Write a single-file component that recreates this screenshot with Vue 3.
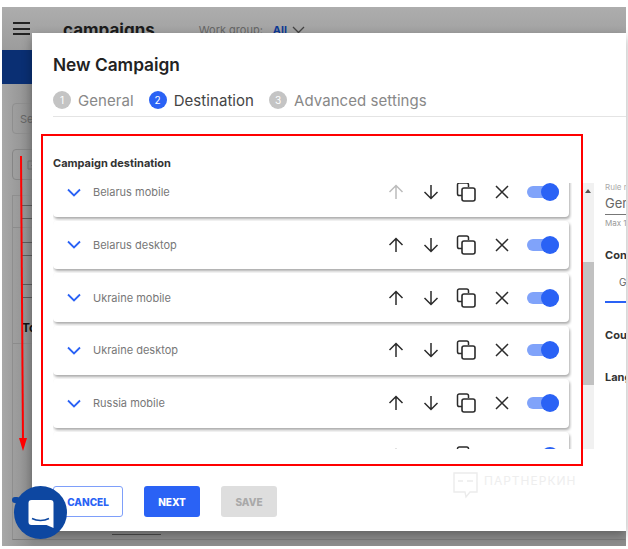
<script setup>
const rows = [
  { name: 'Belarus mobile', upOff: true },
  { name: 'Belarus desktop' },
  { name: 'Ukraine mobile' },
  { name: 'Ukraine desktop' },
  { name: 'Russia mobile' },
  { name: '' }
]
</script>

<template>
  <div class="page">
    <div class="app">
      <header class="topbar">
        <div class="burger"><i></i><i></i><i></i></div>
        <div class="brand">campaigns</div>
        <div class="wg">Work group: <b>All</b>
          <svg width="13" height="8" viewBox="0 0 13 8"><path d="M1 1l5.500 5.500L12 1" fill="none" stroke="#444" stroke-width="1.300"/></svg>
        </div>
      </header>
      <div class="band"></div>
      <div class="side">
        <div class="search">Se</div>
        <div class="tool">
          <svg width="10" height="10" viewBox="0 0 10 10"><path d="M5 1H1v8h8V5M4 6l5-5" fill="none" stroke="#777" stroke-width="1"/></svg>
        </div>
        <div class="tbl">
          <div class="tline"></div>
          <div class="tline"></div>
          <div class="tsep"></div>
          <div class="tline"></div>
          <div class="tline"></div>
          <div class="tline"></div>
          <div class="tline"></div>
          <div class="ttl">To</div>
          <div class="tsep"></div>
        </div>
      </div>
      <i class="dot"></i>
      <i class="handle"></i>
    </div>

    <section class="modal">
      <h1>New Campaign</h1>
      <div class="steps">
        <div class="step"><span class="num">1</span>General</div>
        <div class="step on"><span class="num">2</span>Destination</div>
        <div class="step"><span class="num">3</span>Advanced settings</div>
      </div>
      <div class="body">
        <div class="col">
          <h2>Campaign destination</h2>
          <div class="listwrap">
            <div class="list">
              <div v-for="(r, i) in rows" :key="i" class="card">
                <svg class="chev" width="14" height="9" viewBox="0 0 14 9"><path d="M1 1.500l6 6 6-6" fill="none" stroke="#2a62f5" stroke-width="1.800"/></svg>
                <span class="name">{{ r.name }}</span>
                <div class="acts">
                  <svg class="ic" :class="{ off: r.upOff }" width="18" height="18" viewBox="0 0 18 18"><path d="M9 16V2.500M2.500 9L9 2.500 15.500 9" fill="none" stroke="currentColor" stroke-width="1.500"/></svg>
                  <svg class="ic dn" width="18" height="18" viewBox="0 0 18 18"><path d="M9 2v13.500M2.500 9L9 15.500 15.500 9" fill="none" stroke="currentColor" stroke-width="1.500"/></svg>
                  <svg class="ic" width="20" height="20" viewBox="0 0 20 20"><path d="M6 13.500H3.300A1.800 1.800 0 0 1 1.500 11.700V2.800A1.800 1.800 0 0 1 3.300 1H10.700A1.800 1.800 0 0 1 12.500 2.800V5" fill="none" stroke="currentColor" stroke-width="1.500"/><rect x="6" y="6" width="13" height="13" rx="2" fill="none" stroke="currentColor" stroke-width="1.600"/></svg>
                  <svg class="ic" width="18" height="18" viewBox="0 0 18 18"><path d="M3 3l12 12M15 3L3 15" fill="none" stroke="currentColor" stroke-width="1.500"/></svg>
                  <div class="sw"><i></i></div>
                </div>
              </div>
            </div>
            <div class="scroll">
              <span class="arrow"></span>
              <div class="thumb"></div>
            </div>
          </div>
        </div>
        <aside class="right">
          <div class="rl">Rule name</div>
          <div class="rv">General</div>
          <div class="rm">Max 100</div>
          <div class="rh">Conditions</div>
          <div class="rt">General</div>
          <div class="ru"></div>
          <div class="rh r2">Countries</div>
          <div class="rh r3">Languages</div>
        </aside>
      </div>
      <div class="foot">
        <button class="btn cancel">CANCEL</button>
        <button class="btn next">NEXT</button>
        <button class="btn save">SAVE</button>
        <div class="mark">
          <svg width="25" height="27" viewBox="0 0 25 27"><path d="M1 1h23v19h-7l-4 5-1-5H1z M5 9h5M14 9h6" fill="none" stroke="#ececec" stroke-width="1.400"/></svg>
          <span>ПАРТНЕРКИН</span>
        </div>
      </div>
    </section>

    <div class="redbox"></div>
    <div class="redline"></div>
    <svg class="redhead" width="8" height="13" viewBox="0 0 8 13"><path d="M0 0h8L4 13z" fill="#f00"/></svg>

    <div class="chat">
      <svg width="26" height="30" viewBox="0 0 26 30"><path d="M3.500 1h19a3 3 0 0 1 3 3v25l-7-3H3.500a3 3 0 0 1-3-3V4a3 3 0 0 1 3-3z" fill="#fff"/><path d="M4 19.500c5 2.500 12 2.500 17 0" fill="none" stroke="#0d47a1" stroke-width="1.500"/></svg>
    </div>
  </div>
</template>

<style>
html, body { margin: 0; background: #fff; }
</style>

<style scoped>
.page { width: 628px; height: 549px; position: relative; overflow: hidden; background: #fff; font-family: "Inter", "Liberation Sans", sans-serif; }
.app { position: absolute; left: 2px; top: 7px; right: 2px; bottom: 3px; background: #a2a2a2; display: flex; flex-direction: column; }
.topbar { height: 43px; display: flex; align-items: center; background: linear-gradient(#adadad, #9c9c9c); flex: none; }
.burger { width: 17px; margin-left: 11px; display: flex; flex-direction: column; gap: 3.500px; }
.burger i { height: 2px; background: #222; display: block; }
.brand { margin-left: 33px; font-size: 17px; font-weight: 700; color: #1b1b1b; margin-top: 2px; }
.wg { margin-left: 44px; font-size: 11px; color: #666; display: flex; align-items: center; gap: 5px; margin-top: 2px; }
.wg b { color: #0f3a96; font-weight: 700; margin-left: 5px; }
.band { height: 34px; background: #0a2f73; flex: none; }
.side { padding: 19px 0 0 10px; flex: 1; display: flex; flex-direction: column; background: linear-gradient(90deg, #a8a8a8, #8d8d8d 5%); }
.search { width: 40px; height: 31px; border: 1px solid #8e8e8e; border-radius: 4px; font-size: 11px; color: #666; display: flex; align-items: center; padding-left: 7px; box-sizing: border-box; }
.tool { width: 40px; height: 31px; border: 1px solid #858585; border-radius: 4px; margin-top: 15px; box-sizing: border-box; display: flex; align-items: center; padding-left: 14px; }
.tbl { margin-top: 15px; flex: 1; border: 1px solid #8e8e8e; border-bottom: 1px solid #7c7c7c; display: flex; flex-direction: column; margin-bottom: 6px; }
.tline { height: 1px; background: #5c5c5c; margin-top: 12px; margin-left: 9px; flex: none; }
.tline:first-child { margin-top: 9px; }
.tsep { height: 1px; background: #8b8b8b; margin-top: 8px; flex: none; }
.tsep + .tline { margin-top: 14px; }
.tline:nth-child(6) { margin-top: 28px; }
.ttl { font-size: 12px; line-height: 14px; font-weight: 700; color: #111; margin: 23px 0 0 9px; }
.dot { position: absolute; left: 10px; top: 490px; width: 8px; height: 6px; border-radius: 3px; background: #0d47a1; }
.handle { position: absolute; left: 110px; top: 527px; width: 49px; height: 1px; background: #4c4c4c; }

.modal { position: absolute; left: 32px; top: 33px; right: 2px; height: 498px; background: #fff; padding: 22px 0 0 21px; box-sizing: border-box; display: flex; flex-direction: column; box-shadow: 0 4px 10px rgba(0, 0, 0, .32); }
h1 { margin: 0; font-size: 17.300px; font-weight: 600; color: #222; line-height: 20px; }
.steps { display: flex; gap: 15px; align-items: center; margin-top: 15px; height: 20px; padding-bottom: 6px; border-bottom: 1px solid #e4e4e4; box-sizing: content-box; }
.step { display: flex; align-items: center; gap: 7px; font-size: 15px; letter-spacing: .06px; color: #888; }
.step.on { color: #444; }
.num { width: 18px; height: 18px; border-radius: 50%; background: #c4c4c4; color: #fff; font-size: 10px; display: flex; align-items: center; justify-content: center; }
.on .num { background: #2a62f5; }
.body { display: flex; flex: 1; min-height: 0; margin-top: 39px; }
.col { width: 541px; flex: none; }
h2 { margin: 0 0 13px; font-size: 11px; line-height: 14px; font-weight: 700; color: #333; }
.listwrap { display: flex; height: 266px; }
.list { width: 519px; overflow: hidden; display: flex; flex-direction: column; gap: 4px; flex: none; }
.card { height: 48.750px; flex: none; display: flex; align-items: center; background: #fff; border-radius: 4px; box-shadow: 1px 2px 3px rgba(0, 0, 0, .34); margin-right: 3px; padding: 0 10px 0 16px; box-sizing: border-box; }
.card:first-child { margin-top: -15.250px; }
.chev { flex: none; margin-left: -2px; }
.name { margin-left: 12px; font-size: 11px; color: #777; }
.acts { margin-left: auto; display: flex; align-items: center; }
.ic { color: #2b2b2b; flex: none; margin-right: 17px; }
.ic.dn { margin-right: 16px; }
.ic.off { color: #bcbcbc; }
.sw { width: 32px; height: 12px; background: #80a3fa; border-radius: 6px; position: relative; margin-left: -1px; }
.sw i { position: absolute; width: 18px; height: 18px; border-radius: 50%; background: #2a62f5; right: 0; top: -3px; }
.scroll { width: 12px; margin-left: 10px; background: #f1f1f1; flex: none; position: relative; }
.arrow { position: absolute; left: 3px; top: 6px; border: 3px solid transparent; border-top: 0; border-bottom: 4px solid #555; }
.thumb { position: absolute; left: 0; right: 0; top: 79px; height: 123px; background: #c1c1c1; }

.right { flex: 1; min-width: 0; overflow: hidden; padding-left: 11px; font-size: 11px; color: #333; padding-top: 26px; white-space: nowrap; }
.rl { font-size: 8px; color: #aaa; line-height: 10px; }
.rv { font-size: 13px; color: #666; line-height: 18px; margin-top: 2px; border-bottom: 1px solid #777; padding-bottom: 2px; }
.rm { font-size: 8px; color: #999; line-height: 10px; margin-top: 3px; }
.rh { font-size: 11px; font-weight: 700; line-height: 14px; margin-top: 20px; color: #333; }
.rt { font-size: 10px; color: #666; line-height: 14px; margin: 13px 0 0 14px; }
.ru { height: 2px; background: #2a62f5; margin-top: 12px; }
.r2 { margin-top: 25px; }
.r3 { margin-top: 28px; }

.foot { height: 82px; flex: none; display: flex; align-items: flex-start; gap: 21px; padding-top: 37px; box-sizing: border-box; position: relative; }
.btn { height: 31px; border-radius: 3px; font-family: inherit; font-size: 10px; font-weight: 800; border: none; padding: 0; }
.cancel { width: 70px; background: #fff; border: 1px solid #7e9ffa; color: #2a62f5; }
.next { width: 56px; background: #2a62f5; color: #fff; }
.save { width: 56px; background: #dedede; color: #a9a9a9; }
.mark { position: absolute; left: 400px; top: 23px; display: flex; align-items: flex-start; gap: 6px; color: #eeeeee; font-size: 12px; line-height: 18px; letter-spacing: 1px; }

.redbox { position: absolute; left: 41px; top: 134px; width: 542px; height: 332px; border: 2px solid #f00; box-sizing: border-box; }
.redline { position: absolute; left: 21px; top: 156px; width: 2px; height: 285px; background: #f00; transform: rotate(-.4deg); }
.redhead { position: absolute; left: 19px; top: 438px; }
.chat { position: absolute; left: 14px; top: 486px; width: 53px; height: 53px; border-radius: 50%; background: #0d47a1; display: flex; align-items: center; justify-content: center; }
.chat svg { margin-top: 2px; margin-left: 1px; }
</style>
